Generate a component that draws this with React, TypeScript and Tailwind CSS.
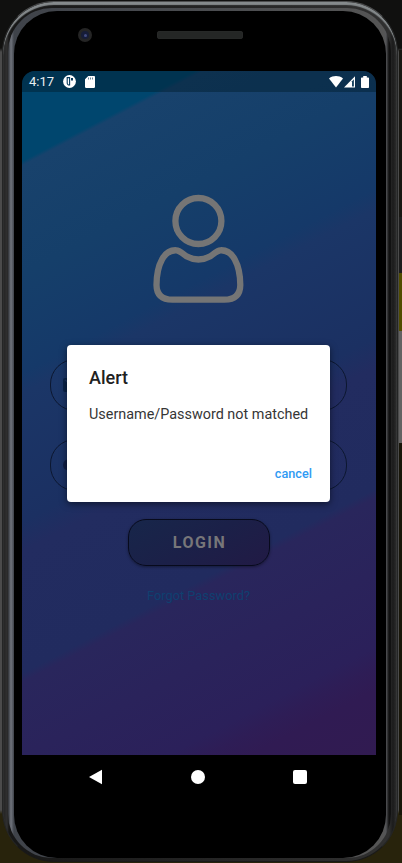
import React from "react";

function StatusBar() {
  return (
    <div className="flex h-[21px] shrink-0 items-center bg-[#001c2c]/45 pr-[7px] pl-[7px] text-white">
      <span className="w-[34px] text-[13px] leading-none text-[#e8eef2]">4:17</span>
      <svg className="h-[13px] w-[13px]" viewBox="0 0 13 13">
        <circle cx="6.5" cy="6.5" r="6.4" fill="#fff" />
        <path d="M6.6 2.6H4.2V8a2 2 0 0 0 2.4 2Z" fill="none" stroke="#06385a" strokeWidth="1.1" />
        <path d="M8 3h2v2.6H8Z" fill="#06385a" />
      </svg>
      <svg className="ml-[9px] h-3 w-[10px]" viewBox="0 0 10 12">
        <path d="M3.3 0H8.8A1.1 1.1 0 0 1 10 1.1v9.7A1.2 1.2 0 0 1 8.8 12H1.2A1.2 1.2 0 0 1 0 10.8V3.3Z" fill="#fff" />
        <path d="M3.5 1.5v2M5.5 1.5v2M7.5 1.5v2" stroke="#6b8798" strokeWidth="1" />
      </svg>
      <div className="grow" />
      <svg className="h-3 w-[14px]" viewBox="0 0 14 12">
        <path d="M0 2.4C4-.8 10-.8 14 2.4L7 11.6Z" fill="#fff" />
      </svg>
      <svg className="ml-[1px] h-3 w-[11px]" viewBox="0 0 11 12">
        <path d="M0 11.5 11 .3V11.5Z" fill="#fff" />
        <path d="M8 5.2 9.9 3.2V10.4H8Z" fill="#17415e" />
      </svg>
      <svg className="ml-[6px] h-3 w-2" viewBox="0 0 8 12">
        <path d="M2.2 0h3.6v1.4H7.2a.8.8 0 0 1 .8.8v9a.8.8 0 0 1-.8.8H.8a.8.8 0 0 1-.8-.8v-9a.8.8 0 0 1 .8-.8h1.4Z" fill="#fff" />
      </svg>
    </div>
  );
}

function Field({ children }: { children: React.ReactNode }) {
  return (
    <div className="flex h-[52px] w-[297px] items-center rounded-[25px] border border-[#0c1730] pl-[12px]">
      {children}
    </div>
  );
}

function LoginPage() {
  return (
    <div className="flex grow flex-col items-center pr-px">
      <svg className="mt-[102px] h-[110px] w-[92px]" viewBox="0.6 0 92 110" fill="none" stroke="#757575" strokeWidth="6.3">
        <circle cx="46" cy="27" r="23" />
        <path d="M24 56.3C12 55.5 4.3 70 4.1 91Q4.3 105.6 20 105.7H72Q87.7 105.6 87.9 91C87.7 70 80 55.5 68 56.3C64 56.5 62 60 58 62.2Q46 68.8 34 62.2C30 60 28 56.5 24 56.3Z" strokeLinejoin="round" />
      </svg>
      <div className="mt-[55px] flex flex-col gap-7">
        <Field>
          <svg className="h-4 w-5" viewBox="0 0 20 16">
            <rect y="1" width="20" height="14" rx="2" fill="#0a2348" />
            <path d="m2 3 8 6 8-6" fill="none" stroke="#1d3666" strokeWidth="1.5" />
          </svg>
        </Field>
        <Field>
          <svg className="h-3 w-5" viewBox="0 0 20 12">
            <path d="M5.5.5A5.5 5.5 0 1 0 10.7 8H14v3h3V8h3V4h-9.3A5.5 5.5 0 0 0 5.5.5Z" fill="#0f1d44" />
          </svg>
        </Field>
      </div>
      <button className="mt-[28px] h-[47px] w-[142px] rounded-[18px] border-[1.5px] border-[#070a1c] bg-linear-150 from-[#17264a] via-[#1b2048] to-[#211a45] pl-[2px] text-[16px] font-bold tracking-[1.45px] text-[#777679] shadow-[0_1px_3px_rgba(0,0,0,0.4)]">
        LOGIN
      </button>
      <a className="mt-[21px] text-[12.8px] leading-[18px] text-[#0f4070]">Forgot Password?</a>
    </div>
  );
}

function AlertDialog() {
  return (
    <div className="absolute top-[274px] left-[45px] flex h-[157px] w-[263px] flex-col rounded-[4px] bg-white pt-[22px] pl-[22px] shadow-[0_2px_7px_rgba(0,0,0,0.5)]">
      <h1 className="text-[18px] leading-[22px] font-medium text-[#212121]">Alert</h1>
      <p className="mt-[17px] text-[14.4px] leading-[18px] whitespace-nowrap text-[#363636]">
        Username/Password not matched
      </p>
      <button className="mt-[42px] mr-[18px] self-end text-[12.7px] leading-[16px] font-medium text-[#2f9af3]">cancel</button>
    </div>
  );
}

function NavigationBar() {
  return (
    <div className="ml-[75px] flex h-[44px] w-[218px] items-center justify-between">
      <svg className="h-4 w-[14px]" viewBox="0 0 14 16">
        <path d="M13 .7v14.6L0 8Z" fill="#fff" />
      </svg>
      <div className="size-[14px] rounded-full bg-white" />
      <div className="size-[14px] rounded-[2px] bg-white" />
    </div>
  );
}

export default function App() {
  return (
    <div className="h-[863px] w-[402px] overflow-hidden bg-[linear-gradient(#10100f_0_48px,#4b4b4b_52px_810px,#28230c_814px)] pt-px pl-[2px] font-[Roboto,'Liberation_Sans',sans-serif]">
      <div className="h-[861px] w-[396px] rounded-[52px] border border-x-[#242525] border-t-[#4c4d4e] border-b-[#191919] bg-[linear-gradient(90deg,#222,#303030_4px,#171717_6px,#303030_386px,#1b1b1b_390px,#303030)] shadow-[inset_0_3px_1px_#858a8c]">
        <div className="ml-[5px] h-[857px] w-[383px] pt-[6px]">
          <div className="h-[850px] rounded-[44px] bg-[linear-gradient(90deg,#2d3034,#70747d_3px,#3f434a_6px,#555_376px,#545558_378px,#111_381px)] pt-[3px] pl-[6px]">
            <div className="h-[847px] w-[372px] rounded-[43px] bg-black">
              <div className="flex h-[60px] pt-[17px] pl-[64px]">
                <div className="flex size-[14px] items-center justify-center rounded-full bg-[#252525]">
                  <div className="flex size-2 items-center justify-center rounded-full bg-[#171d38]">
                    <div className="size-[3px] rounded-full bg-[#424c80]" />
                  </div>
                </div>
                <div className="mt-[3px] ml-[65px] h-[8px] w-[86px] rounded-[3px] bg-[#242625] shadow-[inset_0_0_1px_#444]" />
              </div>
              <div className="relative ml-[8px] flex h-[684px] w-[354px] flex-col overflow-hidden rounded-t-[13px] bg-[linear-gradient(152.4deg,#00466e_0_80px,#18426c_84px,#153f6a_180px,#153969_268px,#1b3667_286px,#1b3062_400px,#222c60_426px,#212b5f_534px,#29265c_542px,#2b205a_674px,#2e1d56_692px,#301b53_712px,#311b51)]">
                <StatusBar />
                <LoginPage />
                <AlertDialog />
              </div>
              <NavigationBar />
            </div>
          </div>
        </div>
      </div>
      <div className="absolute top-[50px] left-[399px] h-[167px] w-[3px] bg-[#181712]" />
      <div className="absolute top-[217px] left-[399px] h-[56px] w-[3px] bg-[#1d1d1d]" />
      <div className="absolute top-[273px] left-[399px] h-[58px] w-[3px] bg-[#514c00]" />
      <div className="absolute top-[331px] left-[399px] h-[112px] w-[3px] bg-[#626262]" />
      <div className="absolute top-[443px] left-[399px] h-[372px] w-[3px] bg-[#181609]" />
    </div>
  );
}
